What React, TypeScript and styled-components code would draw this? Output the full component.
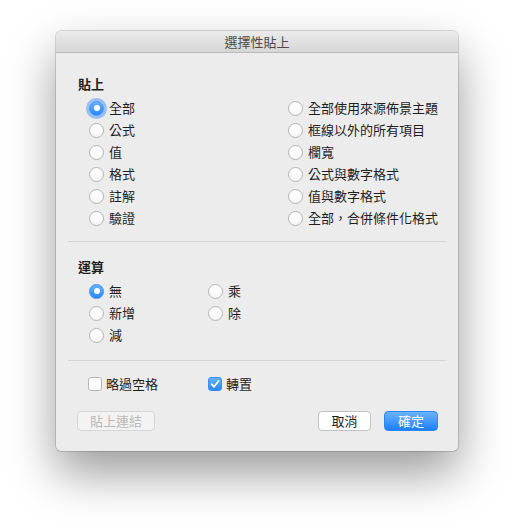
import React from 'react';
import styled, { createGlobalStyle } from 'styled-components';

const Global = createGlobalStyle`
  body {
    margin: 0;
    background: #ffffff;
    font-family: "Noto Sans CJK TC", "Liberation Sans", sans-serif;
    color: #1e1e1e;
  }
`;

const Page = styled.div`
  padding: 31px 0 0 56px;
  width: 514px;
  height: 531px;
  box-sizing: border-box;
`;

const Window = styled.div`
  width: 402px;
  background: #ececec;
  border-radius: 5px;
  overflow: hidden;
  box-shadow: 0 0 0 0.5px rgba(0, 0, 0, 0.28), 0 22px 48px rgba(0, 0, 0, 0.4);
`;

const TitleBar = styled.div`
  height: 21px;
  border-bottom: 1px solid #b9b9b9;
  background: linear-gradient(#ebebeb, #d6d6d6);
  display: flex;
  align-items: center;
  justify-content: center;
  font-size: 13px;
  color: #4b4b4b;
  line-height: 21px;
`;

const Content = styled.div`
  padding: 22px 12px 20px;
  display: flex;
  flex-direction: column;
`;

const Label = styled.div`
  font-size: 13px;
  font-weight: bold;
  line-height: 18px;
  height: 18px;
  margin-left: 10px;
  margin-bottom: 4px;
`;

const Grid = styled.div<{ $col: number; $rows: number }>`
  display: grid;
  grid-template-columns: ${p => p.$col}px 1fr;
  grid-auto-flow: column;
  grid-template-rows: repeat(${p => p.$rows}, 22px);
  margin-left: 21px;
`;

const Option = styled.label`
  display: flex;
  align-items: center;
  height: 22px;
  gap: 5px;
  font-size: 13px;
  line-height: 22px;
  white-space: nowrap;
`;

const Radio = styled.span<{ $on?: boolean; $focus?: boolean }>`
  width: 15px;
  height: 15px;
  box-sizing: border-box;
  border-radius: 50%;
  display: flex;
  align-items: center;
  justify-content: center;
  flex: none;
  border: 1px solid ${p => (p.$on ? '#3a8ff5' : '#b4b4b4')};
  background: ${p => (p.$on ? 'linear-gradient(#68b1fb, #2a88fb)' : 'linear-gradient(#ffffff, #f6f6f6)')};
  box-shadow: ${p => (p.$focus ? '0 0 0 3px rgba(80, 155, 250, 0.55)' : 'none')};
  &::after {
    content: '';
    display: ${p => (p.$on ? 'block' : 'none')};
    width: 6px;
    height: 6px;
    border-radius: 50%;
    background: #ffffff;
  }
`;

const Box = styled.span<{ $on?: boolean }>`
  width: 14px;
  height: 14px;
  box-sizing: border-box;
  border-radius: 3px;
  flex: none;
  display: flex;
  align-items: center;
  justify-content: center;
  border: 1px solid ${p => (p.$on ? '#3a8ff5' : '#b4b4b4')};
  background: ${p => (p.$on ? 'linear-gradient(#68b1fb, #2a88fb)' : '#ffffff')};
`;

const Separator = styled.div<{ $top: number; $bottom: number }>`
  height: 1px;
  background: #d3d3d3;
  margin: ${p => p.$top}px 0 ${p => p.$bottom}px;
`;

const CheckRow = styled.div`
  display: grid;
  grid-template-columns: 120px 1fr;
  margin-left: 20px;
  height: 22px;
`;

const CheckOption = styled(Option)`
  gap: 4px;
`;

const Buttons = styled.div`
  display: flex;
  align-items: center;
  margin: 16px 8px 0 9px;
`;

const Spacer = styled.div`
  flex: 1;
`;

type Kind = 'default' | 'primary' | 'disabled';

const Button = styled.button<{ $kind?: Kind; $w: number }>`
  width: ${p => p.$w}px;
  height: 20px;
  box-sizing: border-box;
  border-radius: 4px;
  font-family: inherit;
  font-size: 13px;
  line-height: 18px;
  padding: 0;
  margin-left: ${p => (p.$kind === 'primary' ? '13px' : '0')};
  border: 1px solid
    ${p => (p.$kind === 'primary' ? '#2d86f5' : p.$kind === 'disabled' ? '#d6d6d6' : '#c2c2c2')};
  background: ${p =>
    p.$kind === 'primary'
      ? 'linear-gradient(#6cb3fa, #1b80fb)'
      : p.$kind === 'disabled'
      ? '#f3f3f3'
      : '#ffffff'};
  color: ${p => (p.$kind === 'primary' ? '#ffffff' : p.$kind === 'disabled' ? '#b8b8b8' : '#1e1e1e')};
`;

const pasteLeft = ['全部', '公式', '值', '格式', '註解', '驗證'];
const pasteRight = ['全部使用來源佈景主題', '框線以外的所有項目', '欄寬', '公式與數字格式', '值與數字格式', '全部，合併條件化格式'];
const ops = ['無', '新增', '減', '乘', '除'];

const Check = () => (
  <svg width="10" height="10" viewBox="0 0 10 10">
    <path d="M1.6 5.2 L4 7.8 L8.6 2" fill="none" stroke="#ffffff" strokeWidth="1.7" strokeLinecap="round" strokeLinejoin="round" />
  </svg>
);

export default function App() {
  return (
    <Page>
      <Global />
      <Window>
        <TitleBar>選擇性貼上</TitleBar>
        <Content>
          <Label>貼上</Label>
          <Grid $col={199} $rows={6}>
            {[...pasteLeft, ...pasteRight].map((t, i) => (
              <Option key={t}>
                <Radio $on={i === 0} $focus={i === 0} />
                {t}
              </Option>
            ))}
          </Grid>
          <Separator $top={12} $bottom={16} />
          <Label>運算</Label>
          <Grid $col={119} $rows={3}>
            {ops.map((t, i) => (
              <Option key={t}>
                <Radio $on={i === 0} />
                {t}
              </Option>
            ))}
          </Grid>
          <Separator $top={14} $bottom={12} />
          <CheckRow>
            <CheckOption>
              <Box />
              略過空格
            </CheckOption>
            <CheckOption>
              <Box $on>
                <Check />
              </Box>
              轉置
            </CheckOption>
          </CheckRow>
          <Buttons>
            <Button $kind="disabled" $w={78}>貼上連結</Button>
            <Spacer />
            <Button $w={53}>取消</Button>
            <Button $kind="primary" $w={54}>確定</Button>
          </Buttons>
        </Content>
      </Window>
    </Page>
  );
}
